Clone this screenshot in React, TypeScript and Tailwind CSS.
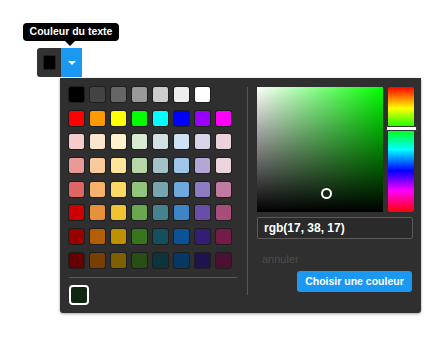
const rows: string[][] = [
  ['#000000', '#434343', '#666666', '#999999', '#cccccc', '#eeeeee', '#ffffff'],
  ['#ff0000', '#ff9900', '#ffff00', '#00ff00', '#00ffff', '#0000ff', '#9900ff', '#ff00ff'],
  ['#f4cccc', '#fce5cd', '#fff2cc', '#d9ead3', '#d0e0e3', '#cfe2f3', '#d9d2e9', '#ead1dc'],
  ['#ea9999', '#f9cb9c', '#ffe599', '#b6d7a8', '#a2c4c9', '#9fc5e8', '#b4a7d6', '#ecd4df'],
  ['#e06666', '#f6b26b', '#ffd966', '#93c47d', '#76a5af', '#6fa8dc', '#8e7cc3', '#c27ba0'],
  ['#cc0000', '#e69138', '#f1c232', '#6aa84f', '#45818e', '#3d85c6', '#674ea7', '#a64d79'],
  ['#990000', '#b45f06', '#bf9000', '#38761d', '#134f5c', '#0b5394', '#351c75', '#741b47'],
  ['#660000', '#783f04', '#7f6000', '#274e13', '#0c343d', '#073763', '#20124d', '#4c1130'],
]

export default function App() {
  return (
    <div className="relative min-h-[337px] bg-white pt-[48px] font-['Liberation_Sans',Arial,sans-serif]">
      {/* tooltip */}
      <div className="absolute left-[23px] top-[23px] flex h-[18px] w-[96px] items-center justify-center rounded-[4px] bg-black text-[10.5px] font-bold text-white">
        Couleur du texte
        <span className="absolute left-[42px] top-[18px] h-0 w-0 border-x-[5px] border-t-[5px] border-x-transparent border-t-black" />
      </div>

      {/* trigger */}
      <div className="ml-[37px] flex h-[29px] w-[45px]">
        <div className="flex w-[24px] items-start rounded-l-[3px] bg-[#323232] pl-[6px] pt-[7px]">
          <span className="h-[15px] w-[13px] rounded-[2px] border border-[#222] bg-black" />
        </div>
        <div className="flex flex-1 items-center justify-center bg-[#1b99f2]">
          <span className="h-0 w-0 border-x-[4px] border-t-[4px] border-x-transparent border-t-white" />
        </div>
      </div>

      {/* panel */}
      <div className="ml-[60px] mt-px flex w-[361px] items-start rounded-b-[3px] bg-[#2f2f2f] pb-[8px] pl-[9px] pr-[7px] pt-[9px] shadow-[0_1px_3px_rgba(0,0,0,0.35)]">
        <div className="flex w-[168px] flex-col">
          <div className="flex flex-col gap-y-[8.7px]">
            {rows.map((row, i) => (
              <div key={i} className="flex gap-x-[6px]">
                {row.map((c, j) => (
                  <span
                    key={j}
                    className="h-[15px] w-[15px] rounded-[2px] shadow-[0_0_0_1px_rgba(0,0,0,0.35)]"
                    style={{ background: c }}
                  />
                ))}
              </div>
            ))}
          </div>
          <div className="mt-[9px] h-px w-full bg-[#5a5a5a]" />
          <span className="mt-[7px] h-[20px] w-[20px] rounded-[4px] border-2 border-white bg-[#112611]" />
        </div>

        <div className="ml-[10px] h-[208px] w-px bg-[#555]" />

        <div className="ml-[9px] flex w-[157px] flex-col">
          <div className="flex h-[125px] gap-[5px]">
            <div className="relative h-[125px] w-[126px] bg-[#00ff00] bg-[linear-gradient(to_top,#000,transparent),linear-gradient(to_right,#fff,rgba(255,255,255,0))]">
              <span className="absolute left-[63.5px] top-[100.5px] h-[11px] w-[11px] rounded-full border-2 border-white" />
            </div>
            <div className="relative h-[125px] w-[26px] rounded-[2px] bg-[linear-gradient(to_bottom,#f00_0%,#ff0_17%,#0f0_33%,#0ff_50%,#00f_67%,#f0f_83%,#f00_100%)]">
              <span className="absolute left-[-2px] top-[39px] h-[5px] w-[31px] rounded-[1px] border border-[#333] bg-white" />
            </div>
          </div>
          <div className="mt-[5px] flex h-[22px] w-[156px] items-center rounded-[2px] border border-[#5a5a5a] bg-[#2a2a2a] pl-[6px] text-[12px] font-bold text-white">
            rgb(17, 38, 17)
          </div>
          <span className="mt-[14px] h-[13px] pl-[5px] text-[11px] leading-[13px] text-[#4c4c4c]">annuler</span>
          <button className="mr-[2px] mt-[5px] flex h-[21px] w-[115px] items-center justify-center self-end rounded-[3px] bg-[#1b99f2] text-[10.5px] font-bold text-white">
            Choisir une couleur
          </button>
        </div>
      </div>
    </div>
  )
}
